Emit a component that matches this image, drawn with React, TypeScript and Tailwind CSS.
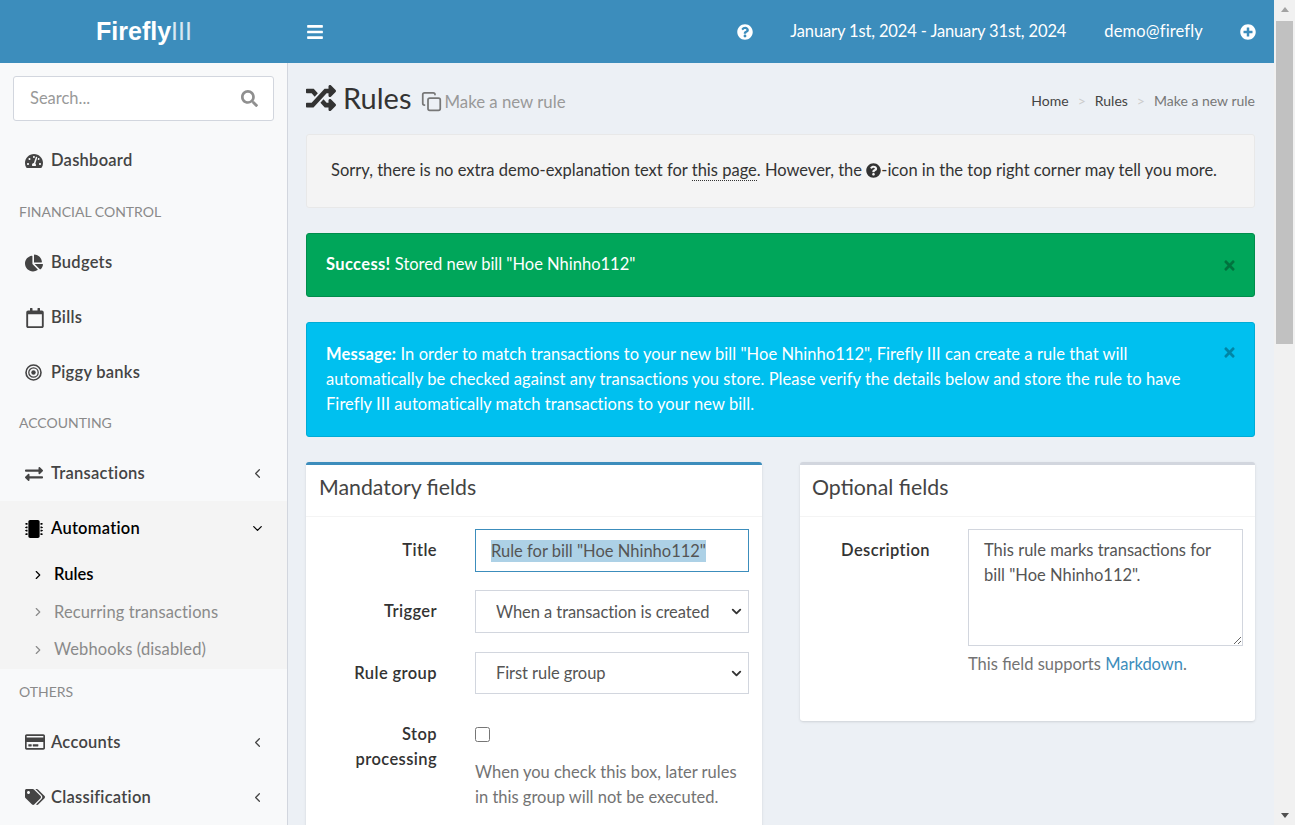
import React from "react";
import {
  FaBars,
  FaChartPie,
  FaExchangeAlt,
  FaMicrochip,
  FaPlusCircle,
  FaQuestionCircle,
  FaRandom,
  FaRegCalendar,
  FaRegCreditCard,
  FaSearch,
  FaTachometerAlt,
  FaTags,
  FaTimes,
} from "react-icons/fa";
import { ChevronDown, ChevronLeft, ChevronRight, Copy } from "lucide-react";

const Bullseye = () => (
  <svg width="17" height="17" viewBox="0 0 17 17" fill="none" stroke="currentColor">
    <circle cx="8.5" cy="8.5" r="7.5" strokeWidth="1.6" />
    <circle cx="8.5" cy="8.5" r="4.7" strokeWidth="1.3" />
    <circle cx="8.5" cy="8.5" r="2.2" fill="currentColor" stroke="none" />
  </svg>
);

const NavItem = ({ icon, label, arrow, active }: { icon: React.ReactNode; label: string; arrow?: React.ReactNode; active?: boolean }) => (
  <div className={`flex h-[55px] items-center pl-[25px] pr-[22px] font-semibold tracking-[0.25px] ${active ? "text-black" : "text-[#444444]"}`}>
    <span className="flex w-[26px] shrink-0 items-center text-[18px]">{icon}</span>
    <span>{label}</span>
    {arrow && <span className="ml-auto">{arrow}</span>}
  </div>
);

const NavHeader = ({ label, size }: { label: string; size: string }) => (
  <div className={`flex items-center pl-[19px] text-[14px] text-[#8a8a8a] ${size}`}>{label}</div>
);

const SubItem = ({ label, active }: { label: string; active?: boolean }) => (
  <div className={`flex h-[37.5px] items-center pl-[31px] ${active ? "font-semibold text-black" : "tracking-[0.12px] text-[#8a8a8a]"}`}>
    <ChevronRight size={14} strokeWidth={2} className="mr-[9px]" />
    <span>{label}</span>
  </div>
);

const Sidebar = () => (
  <aside className="w-[288px] shrink-0 border-r border-[#d2d6de] bg-[#f8f9fa]">
    <div className="px-[13px] pt-[13px] pb-[12px]">
      <div className="flex h-[45px] items-center justify-between rounded-[3px] border border-[#d2d6de] bg-white pl-[16px] pr-[15px]">
        <span className="text-[#999999]">Search...</span>
        <FaSearch className="text-[17px] text-[#8f8f8f]" />
      </div>
    </div>
    <NavItem icon={<FaTachometerAlt />} label="Dashboard" />
    <NavHeader label="FINANCIAL CONTROL" size="h-[47px]" />
    <NavItem icon={<FaChartPie />} label="Budgets" />
    <NavItem icon={<FaRegCalendar className="text-[20px]" />} label="Bills" />
    <NavItem icon={<Bullseye />} label="Piggy banks" />
    <NavHeader label="ACCOUNTING" size="h-[46px] pb-[2px]" />
    <NavItem icon={<FaExchangeAlt />} label="Transactions" arrow={<ChevronLeft size={15} strokeWidth={2} />} />
    <div className="bg-[#f4f4f4]">
      <NavItem icon={<FaMicrochip />} label="Automation" arrow={<ChevronDown size={15} strokeWidth={2} />} active />
      <SubItem label="Rules" active />
      <SubItem label="Recurring transactions" />
      <SubItem label="Webhooks (disabled)" />
    </div>
    <NavHeader label="OTHERS" size="h-[46px]" />
    <NavItem icon={<FaRegCreditCard className="text-[20px]" />} label="Accounts" arrow={<ChevronLeft size={15} strokeWidth={2} />} />
    <NavItem icon={<FaTags className="text-[20px]" />} label="Classification" arrow={<ChevronLeft size={15} strokeWidth={2} />} />
  </aside>
);

const Label = ({ children }: { children: React.ReactNode }) => (
  <div className="w-[131px] shrink-0 text-right font-semibold leading-[25px] tracking-[0.4px] text-[#333333]">{children}</div>
);

const SelectField = ({ value, tall }: { value: string; tall?: boolean }) => (
  <div className="relative w-[274px]">
    <select
      className={`block w-full appearance-none rounded-none border border-[#d2d6de] bg-white pl-[20px] tracking-[-0.07px] text-[#555555] outline-none ${tall ? "h-[43px] pt-[2px]" : "h-[42px]"}`}
      defaultValue={value}
    >
      <option value={value}>{value}</option>
    </select>
    <ChevronDown size={15} strokeWidth={3} className="pointer-events-none absolute top-[14px] right-[5px] text-[#333333]" />
  </div>
);

const MandatoryBox = () => (
  <div className="rounded-[3px] border-t-[3px] border-[#3c8dbc] bg-white pb-[40px] shadow-sm">
    <div className="flex h-[52px] items-center border-b border-[#f4f4f4] pb-[6px] pl-[13px] text-[21.3px] text-[#444444]">
      Mandatory fields
    </div>
    <div className="flex flex-col pt-[12px]">
      <div className="flex items-center gap-[38px] pb-[18px]">
        <Label>Title</Label>
        <div className="flex h-[43px] w-[274px] items-center border border-[#3c8dbc] pl-[15px]">
          <span className="bg-[#add1e6] leading-[22px] text-[#555555]">Rule for bill "Hoe Nhinho112"</span>
        </div>
      </div>
      <div className="flex items-center gap-[38px] pb-[19px]">
        <Label>Trigger</Label>
        <SelectField value="When a transaction is created" tall />
      </div>
      <div className="flex items-center gap-[38px] pb-[28px]">
        <Label>Rule group</Label>
        <SelectField value="First rule group" />
      </div>
      <div className="flex items-start gap-[38px]">
        <Label>
          Stop
          <br />
          processing
        </Label>
        <div className="w-[274px]">
          <input type="checkbox" className="m-0 mt-[5px] block h-[15px] w-[15px]" />
          <p className="mt-[18px] leading-[25px] text-[#737373]">
            When you check this box, later rules in this group will not be executed.
          </p>
        </div>
      </div>
    </div>
  </div>
);

const OptionalBox = () => (
  <div className="self-start rounded-[3px] border-t-[3px] border-[#d2d6de] bg-white shadow-sm">
    <div className="flex h-[52px] items-center border-b border-[#f4f4f4] pb-[6px] pl-[12px] text-[21.3px] text-[#444444]">
      Optional fields
    </div>
    <div className="flex items-start gap-[38px] pt-[12px] pb-[44px]">
      <div className="w-[130px] shrink-0 pt-[9px] text-right font-semibold leading-[25px] tracking-[0.4px] text-[#333333]">Description</div>
      <div className="w-[275px]">
        <textarea
          className="block h-[117px] w-full border border-[#d2d6de] px-[15px] py-[8px] leading-[25px] text-[#555555] outline-none"
          defaultValue={'This rule marks transactions for bill "Hoe Nhinho112".'}
        />
        <p className="mt-[6px] leading-[25px] text-[#737373]">
          This field supports <span className="text-[#3c8dbc]">Markdown</span>.
        </p>
      </div>
    </div>
  </div>
);

const Scrollbar = () => (
  <div className="flex w-[21px] shrink-0 flex-col items-center bg-[#f1f1f1]">
    <div className="mt-[7px] h-0 w-0 border-x-[4px] border-b-[5px] border-x-transparent border-b-[#a3a3a3]" />
    <div className="mt-[9px] h-[323px] w-[17px] bg-[#c1c1c1]" />
    <div className="mt-auto mb-[7px] h-0 w-0 border-x-[4px] border-t-[5px] border-x-transparent border-t-[#505050]" />
  </div>
);

export default function App() {
  return (
    <div className="flex h-[825px] overflow-hidden bg-[#ecf0f5] font-['Lato',sans-serif] text-[16.5px] leading-[25px] text-[#333333]">
      <div className="flex w-[1274px] shrink-0 flex-col">
        <header className="flex h-[63px] shrink-0 items-center bg-[#3c8dbc] text-white">
          <div className="flex w-[288px] justify-center font-['Liberation_Sans',sans-serif] text-[25px]">
            <b>Firefly</b>
            <span className="font-light opacity-80">III</span>
          </div>
          <FaBars className="ml-[18px] text-[18px]" />
          <FaQuestionCircle className="ml-auto text-[16px]" />
          <span className="ml-[37px] tracking-[-0.13px]">January 1st, 2024 - January 31st, 2024</span>
          <span className="ml-[38px] tracking-[0.15px]">demo@firefly</span>
          <FaPlusCircle className="mr-[18px] ml-[37px] text-[16px]" />
        </header>
        <div className="flex min-h-0 flex-1">
          <Sidebar />
          <main className="min-w-0 flex-1 pt-[17px] pr-[19px] pl-[18px]">
            <div className="flex h-[54px] items-start">
              <FaRandom className="mt-[3px] text-[30px] text-[#333333]" />
              <h1 className="ml-[7px] text-[29px] leading-[36px] text-[#333333]">Rules</h1>
              <Copy size={21} strokeWidth={2} className="mt-[11px] ml-[10px] text-[#777777]" />
              <span className="mt-[9px] ml-[2px] text-[16.8px] text-[#999999]">Make a new rule</span>
              <div className="mt-[8px] ml-auto flex items-center text-[14px]">
                <span className="text-[#444444]">Home</span>
                <span className="mx-[9px] text-[#cccccc]">&gt;</span>
                <span className="text-[#444444]">Rules</span>
                <span className="mx-[9px] text-[#cccccc]">&gt;</span>
                <span className="text-[#777777]">Make a new rule</span>
              </div>
            </div>
            <div className="mb-[25px] flex h-[74px] items-center rounded-[3px] border border-[#e8e8e8] bg-[#f4f4f4] pb-[2px] pl-[24px] text-[#333333]">
              <span>
                Sorry, there is no extra demo-explanation text for{" "}
                <span className="border-b border-dotted border-[#333333]">this page</span>. However, the{" "}
                <FaQuestionCircle className="inline align-[-2px] text-[15px]" />
                -icon in the top right corner may tell you more.
              </span>
            </div>
            <div className="mb-[25px] flex h-[64px] items-center justify-between rounded-[3px] border border-[#008d4c] bg-[#00a65a] pr-[17px] pb-[2px] pl-[19px] text-white">
              <span>
                <b className="tracking-[0.35px]">Success!</b> Stored new bill "Hoe Nhinho112"
              </span>
              <FaTimes className="mt-[2px] text-[15px] text-[#000000] opacity-30" />
            </div>
            <div className="mb-[25px] flex h-[115px] items-start justify-between rounded-[3px] border border-[#00acd6] bg-[#00c0ef] pt-[19px] pr-[17px] pl-[19px] text-white">
              <p className="w-[870px] tracking-[0.06px]">
                <b className="tracking-[0.2px]">Message:</b> In order to match transactions to your new bill "Hoe Nhinho112", Firefly III can create a rule
                that will automatically be checked against any transactions you store. Please verify the details below and store
                the rule to have Firefly III automatically match transactions to your new bill.
              </p>
              <FaTimes className="mt-[3px] text-[15px] text-[#000000] opacity-30" />
            </div>
            <div className="grid grid-cols-[456px_455px] gap-[38px]">
              <MandatoryBox />
              <OptionalBox />
            </div>
          </main>
        </div>
      </div>
      <Scrollbar />
    </div>
  );
}
